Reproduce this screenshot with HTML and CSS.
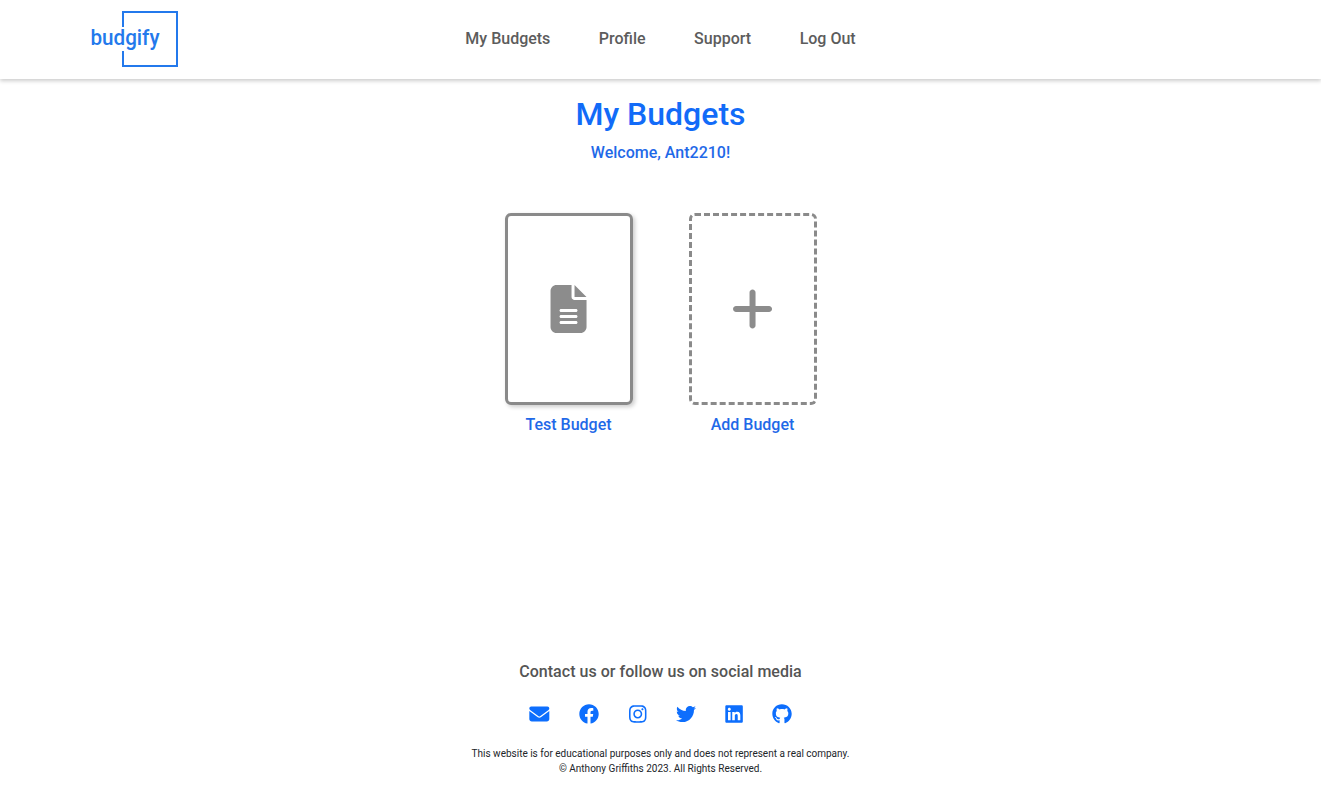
FILE: index.html
```html
<!DOCTYPE html>
<html lang="en">
<head>
<meta charset="utf-8">
<title>Budgify - My Budgets</title>
<link rel="stylesheet" href="styles.css">
</head>
<body>
<header class="header">
  <a class="logo" aria-label="budgify">
    <svg width="90" height="60" viewBox="0 0 90 60">
      <path class="logo-frame" d="M34 18V3H88V57H34V42"/>
      <text class="logo-text" x="1.500" y="35.500" textLength="69" lengthAdjust="spacingAndGlyphs">budgify</text>
    </svg>
  </a>
  <nav class="nav">
    <a>My Budgets</a>
    <a>Profile</a>
    <a>Support</a>
    <a>Log Out</a>
  </nav>
</header>
<main class="main">
  <h1 class="title">My Budgets</h1>
  <p class="welcome">Welcome, Ant2210!</p>
  <div class="budgets">
    <div class="budget">
      <div class="card card-file">
        <svg class="card-icon" width="36" height="48" viewBox="5 0 384 512"><path d="M64 0C28.700 0 0 28.700 0 64V448c0 35.300 28.700 64 64 64H320c35.300 0 64-28.700 64-64V160H256c-17.700 0-32-14.300-32-32V0H64zM256 0V128H384L256 0zM112 256H272c8.800 0 16 7.200 16 16s-7.200 16-16 16H112c-8.800 0-16-7.200-16-16s7.200-16 16-16zm0 64H272c8.800 0 16 7.200 16 16s-7.200 16-16 16H112c-8.800 0-16-7.200-16-16s7.200-16 16-16zm0 64H272c8.800 0 16 7.200 16 16s-7.200 16-16 16H112c-8.800 0-16-7.200-16-16s7.200-16 16-16z"/></svg>
      </div>
      <span class="label">Test Budget</span>
    </div>
    <div class="budget">
      <div class="card card-add">
        <svg class="card-icon" width="42" height="48" viewBox="5 0 448 512"><path d="M256 80c0-17.700-14.300-32-32-32s-32 14.300-32 32V224H48c-17.700 0-32 14.300-32 32s14.300 32 32 32H192V432c0 17.700 14.300 32 32 32s32-14.300 32-32V288H400c17.700 0 32-14.300 32-32s-14.300-32-32-32H256V80z"/></svg>
      </div>
      <span class="label">Add Budget</span>
    </div>
  </div>
</main>
<footer class="footer">
  <h2 class="contact">Contact us or follow us on social media</h2>
  <div class="social">
    <svg width="20" height="20" viewBox="-8 0 512 512"><path d="M48 64C21.500 64 0 85.500 0 112c0 15.100 7.100 29.300 19.200 38.400L236.800 313.600c11.400 8.500 27 8.500 38.400 0L492.800 150.400c12.100-9.100 19.200-23.300 19.200-38.400c0-26.500-21.500-48-48-48H48zM0 176V384c0 35.300 28.700 64 64 64H448c35.300 0 64-28.700 64-64V176L294.400 339.200c-22.800 17.100-54 17.100-76.800 0L0 176z"/></svg>
    <svg width="20" height="20" viewBox="0 0 512 512"><path d="M504 256C504 119 393 8 256 8S8 119 8 256c0 123.780 90.690 226.380 209.250 245V327.690h-63V256h63v-54.640c0-62.150 37-96.480 93.670-96.480 27.140 0 55.520 4.840 55.520 4.840v61h-31.280c-30.800 0-40.410 19.120-40.410 38.730V256h68.780l-11 71.690h-57.780V501C413.310 482.380 504 379.780 504 256z"/></svg>
    <svg width="17.5" height="20" viewBox="0 0 448 512"><path d="M224.100 141c-63.600 0-114.900 51.300-114.900 114.900s51.300 114.900 114.900 114.900S339 319.500 339 255.900 287.700 141 224.100 141zm0 189.600c-41.100 0-74.700-33.500-74.700-74.700s33.500-74.700 74.700-74.700 74.700 33.500 74.700 74.700-33.600 74.700-74.700 74.700zm146.400-194.300c0 14.900-12 26.800-26.800 26.800-14.900 0-26.800-12-26.800-26.800s12-26.800 26.800-26.800 26.800 12 26.800 26.800zm76.100 27.200c-1.700-35.900-9.900-67.700-36.200-93.900-26.200-26.200-58-34.400-93.900-36.200-37-2.100-147.900-2.100-184.900 0-35.800 1.700-67.600 9.900-93.900 36.100s-34.400 58-36.200 93.900c-2.100 37-2.100 147.900 0 184.900 1.700 35.900 9.900 67.700 36.200 93.900s58 34.400 93.900 36.200c37 2.100 147.900 2.100 184.900 0 35.900-1.700 67.700-9.900 93.900-36.200 26.200-26.200 34.400-58 36.200-93.900 2.100-37 2.100-147.800 0-184.800zM398.800 388c-7.800 19.600-22.900 34.700-42.600 42.600-29.500 11.700-99.500 9-132.100 9s-102.700 2.600-132.100-9c-19.600-7.800-34.700-22.900-42.600-42.600-11.700-29.500-9-99.500-9-132.100s-2.600-102.700 9-132.100c7.800-19.600 22.900-34.700 42.600-42.600 29.500-11.700 99.500-9 132.100-9s102.700-2.600 132.100 9c19.600 7.800 34.700 22.900 42.600 42.600 11.700 29.500 9 99.500 9 132.100s2.700 102.700-9 132.100z"/></svg>
    <svg width="20" height="20" viewBox="0 0 512 512"><path d="M459.370 151.716c.325 4.548.325 9.097.325 13.645 0 138.720-105.583 298.558-298.558 298.558-59.452 0-114.680-17.219-161.137-47.106 8.447.974 16.568 1.299 25.340 1.299 49.055 0 94.213-16.568 130.274-44.832-46.132-.975-84.792-31.188-98.112-72.772 6.498.974 12.995 1.624 19.818 1.624 9.421 0 18.843-1.300 27.614-3.573-48.081-9.747-84.143-51.980-84.143-102.985v-1.299c13.969 7.797 30.214 12.670 47.431 13.319-28.264-18.843-46.781-51.005-46.781-87.391 0-19.492 5.197-37.360 14.294-52.954 51.655 63.675 129.300 105.258 216.365 109.807-1.624-7.797-2.599-15.918-2.599-24.040 0-57.828 46.782-104.934 104.934-104.934 30.213 0 57.502 12.670 76.670 33.137 23.715-4.548 46.456-13.320 66.599-25.340-7.798 24.366-24.366 44.833-46.132 57.827 21.117-2.273 41.584-8.122 60.426-16.243-14.292 20.791-32.161 39.308-52.628 54.253z"/></svg>
    <svg width="17.5" height="20" viewBox="-8 0 448 512"><path d="M416 32H31.900C14.300 32 0 46.500 0 64.300v383.400C0 465.500 14.300 480 31.900 480H416c17.600 0 32-14.500 32-32.300V64.300c0-17.800-14.400-32.300-32-32.300zM135.400 416H69V202.200h66.500V416zm-33.200-243c-21.300 0-38.500-17.300-38.500-38.500S80.900 96 102.200 96c21.200 0 38.500 17.300 38.500 38.500 0 21.300-17.200 38.500-38.500 38.500zm282.100 243h-66.400V312c0-24.800-.5-56.700-34.500-56.700-34.600 0-39.900 27-39.900 54.900V416h-66.400V202.200h63.700v29.200h.9c8.900-16.800 30.600-34.500 62.900-34.500 67.200 0 79.700 44.300 79.700 101.900V416z"/></svg>
    <svg width="19.4" height="20" viewBox="-8 0 496 512"><path d="M244.800 8C106.100 8 0 113.300 0 252c0 110.900 69.800 205.800 169.500 239.200 12.800 2.300 17.300-5.600 17.300-12.100 0-6.200-.3-40.400-.3-61.400 0 0-70 15-84.700-29.800 0 0-11.400-29.100-27.800-36.600 0 0-22.900-15.700 1.600-15.400 0 0 24.900 2 38.600 25.800 21.900 38.600 58.600 27.500 72.900 20.900 2.300-16 8.800-27.100 16-33.700-55.900-6.200-112.300-14.300-112.300-110.500 0-27.500 7.600-41.300 23.600-58.900-2.600-6.500-11.100-33.300 2.600-67.900 20.900-6.500 69 27 69 27 20-5.600 41.500-8.500 62.800-8.500s42.800 2.900 62.800 8.500c0 0 48.100-33.600 69-27 13.700 34.700 5.200 61.400 2.600 67.900 16 17.700 25.800 31.500 25.800 58.900 0 96.500-58.900 104.200-114.800 110.500 9.200 7.900 17 22.900 17 46.400 0 33.700-.3 75.400-.3 83.600 0 6.500 4.600 14.400 17.300 12.100C428.200 457.800 496 362.900 496 252 496 113.300 383.500 8 244.800 8z"/></svg>
  </div>
  <p class="legal">This website is for educational purposes only and does not represent a real company.<br>© Anthony Griffiths 2023. All Rights Reserved.</p>
</footer>
</body>
</html>
```
FILE: styles.css
```css
* { box-sizing: border-box; }
body {
  margin: 0;
  height: 788px;
  display: flex;
  flex-direction: column;
  overflow: hidden;
  background: #fff;
  color: #212529;
  font: 500 16px/24px Roboto, sans-serif;
}
h1, h2, p { margin: 0; }
svg { overflow: visible; }
.header {
  flex: none;
  height: 79px;
  padding: 9px 89px 0;
  display: grid;
  grid-template-columns: 1fr auto 1fr;
  align-items: start;
  box-shadow: 0 2px 4px rgba(0, 0, 0, .2);
}
.logo svg { display: block; }
.logo-frame { fill: none; stroke: #2379ec; stroke-width: 2; }
.logo-text { fill: #2379ec; font: 500 22px Roboto, sans-serif; }
.nav { display: flex; gap: 48.5px; padding-top: 18px; color: #5c5c5c; }
.main { flex: 1; text-align: center; color: #1f69e8; padding-top: 16px; }
.title { font-size: 32px; line-height: 38px; font-weight: 500; color: #126bf8; }
.welcome { margin-top: 8px; }
.budgets { display: flex; justify-content: center; gap: 56px; margin-top: 48px; }
.budget { width: 128px; }
.card {
  height: 192px;
  display: flex;
  align-items: center;
  justify-content: center;
  border: 3px solid #8a8a8a;
  border-radius: 6px;
}
.card-file { box-shadow: 2px 2px 4px rgba(0, 0, 0, .2); }
.card-add { border-style: dashed; }
.card-icon { fill: #8c8c8c; }
.label { display: block; margin-top: 8px; }
.footer { flex: none; height: 128px; text-align: center; }
.contact { font-size: 16px; line-height: 24px; font-weight: 500; letter-spacing: .03px; color: #555; }
.social { display: flex; justify-content: center; gap: 29.6px; margin-top: 20px; fill: #0d6efd; }
.legal { margin-top: 22px; font-size: 10px; line-height: 15px; font-weight: 400; }
```
